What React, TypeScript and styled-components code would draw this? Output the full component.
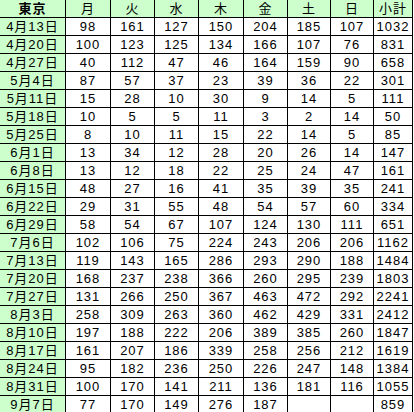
import { Fragment } from 'react';
import styled, { createGlobalStyle } from 'styled-components';

const GlobalStyle = createGlobalStyle`
  html, body {
    margin: 0;
    padding: 0;
    background: #ffffff;
  }
`;

const days = ['月', '火', '水', '木', '金', '土', '日', '小計'];

const rows: [string, (number | null)[]][] = [
  ['4月13日', [98, 161, 127, 150, 204, 185, 107, 1032]],
  ['4月20日', [100, 123, 125, 134, 166, 107, 76, 831]],
  ['4月27日', [40, 112, 47, 46, 164, 159, 90, 658]],
  ['5月4日', [87, 57, 37, 23, 39, 36, 22, 301]],
  ['5月11日', [15, 28, 10, 30, 9, 14, 5, 111]],
  ['5月18日', [10, 5, 5, 11, 3, 2, 14, 50]],
  ['5月25日', [8, 10, 11, 15, 22, 14, 5, 85]],
  ['6月1日', [13, 34, 12, 28, 20, 26, 14, 147]],
  ['6月8日', [13, 12, 18, 22, 25, 24, 47, 161]],
  ['6月15日', [48, 27, 16, 41, 35, 39, 35, 241]],
  ['6月22日', [29, 31, 55, 48, 54, 57, 60, 334]],
  ['6月29日', [58, 54, 67, 107, 124, 130, 111, 651]],
  ['7月6日', [102, 106, 75, 224, 243, 206, 206, 1162]],
  ['7月13日', [119, 143, 165, 286, 293, 290, 188, 1484]],
  ['7月20日', [168, 237, 238, 366, 260, 295, 239, 1803]],
  ['7月27日', [131, 266, 250, 367, 463, 472, 292, 2241]],
  ['8月3日', [258, 309, 263, 360, 462, 429, 331, 2412]],
  ['8月10日', [197, 188, 222, 206, 389, 385, 260, 1847]],
  ['8月17日', [161, 207, 186, 339, 258, 256, 212, 1619]],
  ['8月24日', [95, 182, 236, 250, 226, 247, 148, 1384]],
  ['8月31日', [100, 170, 141, 211, 136, 181, 116, 1055]],
  ['9月7日', [77, 170, 149, 276, 187, null, null, 859]],
];

const Sheet = styled.div`
  display: grid;
  grid-template-columns: 65px 44px 43px 43px 44px 43px 42px 42px 38px;
  grid-auto-rows: 17px;
  gap: 1px;
  width: fit-content;
  padding-right: 1px;
  background: #000000;
  font-family: 'Liberation Sans', 'Noto Sans CJK JP', sans-serif;
  font-size: 13px;
  color: #000000;
`;

const Cell = styled.div<{ $green?: boolean; $bold?: boolean }>`
  background: ${(p) => (p.$green ? '#ccffcc' : '#ffffff')};
  font-weight: ${(p) => (p.$bold ? 700 : 400)};
  line-height: 17px;
  text-align: center;
  letter-spacing: 1px;
  white-space: nowrap;
  overflow: hidden;
`;

const App = () => {
  return (
    <>
      <GlobalStyle />
      <Sheet>
        <Cell $green $bold>
          東京
        </Cell>
        {days.map((d) => (
          <Cell key={d} $green>
            {d}
          </Cell>
        ))}
        {rows.map(([label, values]) => (
          <Fragment key={label}>
            <Cell $green>{label}</Cell>
            {values.map((v, i) => (
              <Cell key={i}>{v ?? ''}</Cell>
            ))}
          </Fragment>
        ))}
      </Sheet>
    </>
  );
};

export default App;
